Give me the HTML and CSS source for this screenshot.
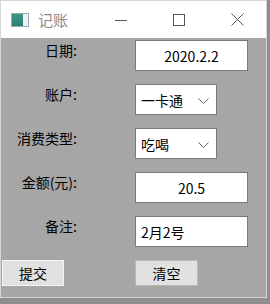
FILE: index.html
```html
<!DOCTYPE html>
<html lang="zh-CN">
<head>
    <meta charset="UTF-8">
    <title>记账</title>
    <link rel="stylesheet" href="styles.css">
</head>
<body>
    <div class="window">
        <div class="titlebar">
            <div class="app-icon"><span class="icon-left"></span><span class="icon-right"></span></div>
            <span class="title">记账</span>
            <div class="controls">
                <span class="ctrl">
                    <svg width="12" height="12" viewBox="0 0 12 12"><path d="M0 6.5h12" stroke="#555" stroke-width="1"/></svg>
                </span>
                <span class="ctrl">
                    <svg width="12" height="12" viewBox="0 0 12 12"><rect x="0.5" y="0.5" width="11" height="11" fill="none" stroke="#555" stroke-width="1"/></svg>
                </span>
                <span class="ctrl">
                    <svg width="13" height="13" viewBox="0 0 13 13"><path d="M0.5 0.5l12 12M12.5 0.5l-12 12" stroke="#555" stroke-width="1"/></svg>
                </span>
            </div>
        </div>

        <div class="content">
            <div class="row">
                <label class="label">日期:</label>
                <div class="field text center">2020.2.2</div>
            </div>
            <div class="row">
                <label class="label">账户:</label>
                <div class="field combo">一卡通<span class="chevron"><svg width="11" height="6" viewBox="0 0 11 6"><path d="M0.5 0.5l5 5 5-5" fill="none" stroke="#666" stroke-width="1"/></svg></span></div>
            </div>
            <div class="row">
                <label class="label">消费类型:</label>
                <div class="field combo">吃喝<span class="chevron"><svg width="11" height="6" viewBox="0 0 11 6"><path d="M0.5 0.5l5 5 5-5" fill="none" stroke="#666" stroke-width="1"/></svg></span></div>
            </div>
            <div class="row">
                <label class="label">金额(元):</label>
                <div class="field text center">20.5</div>
            </div>
            <div class="row">
                <label class="label">备注:</label>
                <div class="field text">2月2号</div>
            </div>
            <div class="buttons">
                <button class="btn btn-submit">提交</button>
                <button class="btn btn-clear">清空</button>
            </div>
        </div>
    </div>
</body>
</html>
```

FILE: styles.css
```css
body {
    margin: 0;
    padding: 0;
    background-color: #8e8e8e;
    font-family: "Noto Sans CJK SC", "Noto Sans", sans-serif;
    font-size: 14px;
    color: #000;
    width: 270px;
    height: 304px;
    overflow: hidden;
}
.window {
    width: 265px;
    height: 296px;
    border: 1px solid #d6d6d6;
    background-color: #a6a6a6;
}
.titlebar {
    height: 37px;
    background-color: #fff;
    display: flex;
    align-items: center;
}
.app-icon {
    display: flex;
    width: 16px;
    height: 12px;
    margin-left: 10px;
    margin-top: 1px;
    border: 1px solid #9aa;
}
.icon-left {
    width: 11px;
    background: linear-gradient(#3d9b86, #2c7d74);
}
.icon-right {
    flex: 1;
    background-color: #f2f2f2;
}
.title {
    margin-left: 9px;
    font-size: 15px;
    color: #8a8a8a;
}
.controls {
    display: flex;
    margin-left: auto;
}
.ctrl {
    width: 58px;
    height: 37px;
    display: flex;
    align-items: center;
    justify-content: center;
}
.content {
    padding-top: 2px;
    display: flex;
    flex-direction: column;
    gap: 13px;
}
.row {
    display: flex;
    align-items: flex-start;
}
.label {
    width: 76px;
    text-align: right;
    line-height: 20px;
    margin-right: 58px;
}
.field {
    box-sizing: border-box;
    height: 31px;
    background-color: #fff;
    border: 1px solid #7a7a7a;
    display: flex;
    align-items: center;
    padding: 0 5px;
}
.text {
    width: 113px;
}
.center {
    justify-content: center;
}
.combo {
    width: 82px;
    position: relative;
}
.chevron {
    position: absolute;
    right: 7px;
    top: 13px;
    display: flex;
}
.buttons {
    display: flex;
    padding-left: 1px;
}
.btn {
    font-family: inherit;
    font-size: 14px;
    color: #000;
    height: 26px;
    background-color: #e1e1e1;
    padding: 0;
    margin: 0;
}
.btn-submit {
    width: 62px;
    border: 1px solid #f4f4f4;
    margin-right: 71px;
}
.btn-clear {
    width: 63px;
    border: 1px solid #b8b8b8;
}
```
